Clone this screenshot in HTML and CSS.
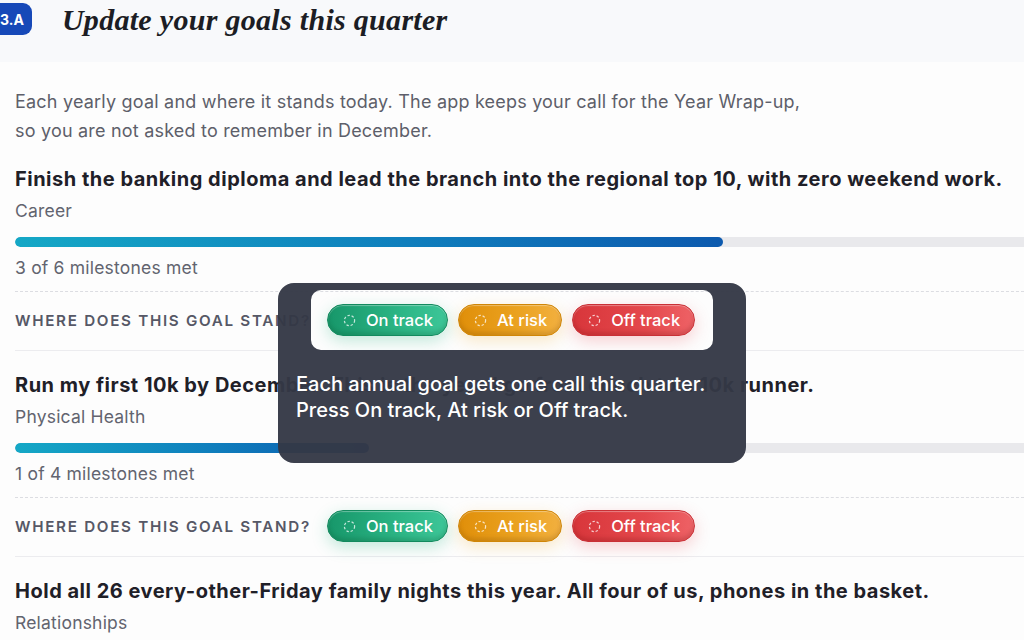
FILE: index.html
```html
<!DOCTYPE html>
<html lang="en">

<head>
    <meta charset="UTF-8">
    <meta name="viewport" content="width=device-width, initial-scale=1.0">
    <title>Quarterly goal check-in</title>
    <link rel="stylesheet" href="styles.css">
</head>

<body>
    <header class="top-bar">
        <span class="step-badge">3.A</span>
        <h1 class="page-title">Update your goals this quarter</h1>
    </header>

    <main class="content">
        <p class="intro">
            Each yearly goal and where it stands today. The app keeps your call for the Year Wrap-up,<br>
            so you are not asked to remember in December.
        </p>

        <section class="goal">
            <h3 class="goal-title">Finish the banking diploma and lead the branch into the regional top 10, with zero weekend work.</h3>
            <p class="goal-area">Career</p>
            <div class="bar"><div class="bar-fill" style="width: 50%"></div></div>
            <p class="milestones">3 of 6 milestones met</p>
            <div class="status-row">
                <span class="status-label">Where does this goal stand?</span>
                <div class="status-buttons">
                    <button class="pill green"><svg viewBox="0 0 14 14"><circle cx="7" cy="7" r="5.5" /></svg>On track</button>
                    <button class="pill amber"><svg viewBox="0 0 14 14"><circle cx="7" cy="7" r="5.5" /></svg>At risk</button>
                    <button class="pill red"><svg viewBox="0 0 14 14"><circle cx="7" cy="7" r="5.5" /></svg>Off track</button>
                </div>
            </div>
        </section>

        <section class="goal">
            <h3 class="goal-title">Run my first 10k by December. This is the year I go from couch to a 10k runner.</h3>
            <p class="goal-area">Physical Health</p>
            <div class="bar"><div class="bar-fill" style="width: 25%"></div></div>
            <p class="milestones">1 of 4 milestones met</p>
            <div class="status-row">
                <span class="status-label">Where does this goal stand?</span>
                <div class="status-buttons">
                    <button class="pill green"><svg viewBox="0 0 14 14"><circle cx="7" cy="7" r="5.5" /></svg>On track</button>
                    <button class="pill amber"><svg viewBox="0 0 14 14"><circle cx="7" cy="7" r="5.5" /></svg>At risk</button>
                    <button class="pill red"><svg viewBox="0 0 14 14"><circle cx="7" cy="7" r="5.5" /></svg>Off track</button>
                </div>
            </div>
        </section>

        <section class="goal">
            <h3 class="goal-title">Hold all 26 every-other-Friday family nights this year. All four of us, phones in the basket.</h3>
            <p class="goal-area">Relationships</p>
        </section>

        <!-- coach mark over the first goal's buttons -->
        <div class="coach">
            <p class="coach-text">Each annual goal gets one call this quarter.<br>Press On track, At risk or Off track.</p>
        </div>
    </main>
</body>

</html>
```

FILE: styles.css
```css
body {
    margin: 0;
    background-color: #fdfdfd;
    font-family: Inter, "Noto Sans", sans-serif;
    color: #1f2028;
    overflow: hidden;
    width: 1024px;
    height: 640px;
}

.top-bar {
    display: flex;
    align-items: flex-start;
    gap: 28px;
    height: 62px;
    box-sizing: border-box;
    padding-top: 3px;
    background-color: #f8f9fb;
}

.step-badge {
    display: flex;
    align-items: center;
    height: 32px;
    margin-left: -8px;
    padding: 0 8px;
    background-color: #1749b8;
    color: white;
    font-weight: 700;
    font-size: 14px;
    border-radius: 9px;
}

.page-title {
    margin: 0 0 0 2px;
    font-family: "Liberation Serif", serif;
    font-style: italic;
    font-weight: 700;
    font-size: 30px;
    letter-spacing: 0.3px;
    line-height: 34px;
    color: #1c1d24;
}

.content {
    position: relative;
    padding: 25px 0 0 15px;
}

.intro {
    margin: 0;
    font-size: 18px;
    letter-spacing: 0.2px;
    line-height: 29px;
    color: #5d5f6a;
}

.goal {
    padding-top: 20px;
}

.goal-title {
    margin: 0;
    font-size: 20px;
    letter-spacing: 0.5px;
    line-height: 28px;
    font-weight: 700;
    color: #1f2028;
    white-space: nowrap;
}

.goal-area {
    margin: 4px 0 0;
    font-size: 17.5px;
    letter-spacing: 0.2px;
    line-height: 28px;
    color: #62646f;
}

.bar {
    margin-top: 12px;
    width: 1416px;
    height: 10px;
    border-radius: 5px;
    background-color: #e9e9ec;
    overflow: hidden;
}

.bar-fill {
    height: 100%;
    border-radius: 5px;
    background: linear-gradient(to right, #15a8c6, #0f7fbd 55%, #0d5aae);
}

.milestones {
    margin: 8px 0 0;
    font-size: 17.5px;
    letter-spacing: 0.2px;
    line-height: 26px;
    color: #62646f;
}

.status-row {
    display: flex;
    align-items: center;
    gap: 16px;
    margin-top: 10px;
    margin-right: -15px;
    padding: 12px 0 14px;
    border-top: 1px dashed #dcdde2;
    border-bottom: 1px solid #ececef;
}

.status-label {
    font-size: 15.2px;
    font-weight: 600;
    letter-spacing: 1.7px;
    text-transform: uppercase;
    color: #565866;
}

.status-buttons {
    display: flex;
    gap: 10px;
}

.pill {
    display: flex;
    align-items: center;
    gap: 10px;
    height: 32px;
    padding: 0 14px 0 15px;
    border-radius: 16px;
    font-family: Inter, sans-serif;
    font-size: 16.5px;
    font-weight: 500;
    color: white;
    cursor: pointer;
}

.pill svg {
    width: 13px;
    height: 13px;
}

.pill circle {
    fill: none;
    stroke: rgba(255, 255, 255, 0.75);
    stroke-width: 1.3;
    stroke-dasharray: 2.6 2;
}

.green {
    border: 1px solid #138a5e;
    background: linear-gradient(to right, #17976a, #2cb585 60%, #3dc698);
    box-shadow: inset 0 1px 1px rgba(255, 255, 255, 0.35), inset 0 -3px 4px rgba(0, 60, 30, 0.18), 0 5px 16px rgba(40, 180, 130, 0.28);
}

.amber {
    border: 1px solid #d08607;
    background: linear-gradient(to right, #e08f0a, #eba321 60%, #f2b040);
    box-shadow: inset 0 1px 1px rgba(255, 255, 255, 0.35), inset 0 -3px 4px rgba(90, 50, 0, 0.18), 0 5px 16px rgba(240, 170, 40, 0.25);
}

.red {
    border: 1px solid #c93036;
    background: linear-gradient(to right, #d8363b, #e4484c 60%, #ee6266);
    box-shadow: inset 0 1px 1px rgba(255, 255, 255, 0.35), inset 0 -3px 4px rgba(90, 0, 0, 0.18), 0 5px 16px rgba(230, 70, 80, 0.25);
}

.coach {
    position: absolute;
    top: 221px;
    left: 278px;
    width: 468px;
    height: 180px;
    box-sizing: border-box;
    padding: 88px 18px 0;
    background-color: rgba(52, 56, 70, 0.96);
    clip-path: path(evenodd, 'M16,0 H452 A16,16 0 0 1 468,16 V164 A16,16 0 0 1 452,180 H16 A16,16 0 0 1 0,164 V16 A16,16 0 0 1 16,0 Z M43,7 H425 A10,10 0 0 1 435,17 V57 A10,10 0 0 1 425,67 H43 A10,10 0 0 1 33,57 V17 A10,10 0 0 1 43,7 Z');
}

.coach-text {
    margin: 0;
    font-size: 20px;
    line-height: 26px;
    font-weight: 500;
    color: white;
}
```
